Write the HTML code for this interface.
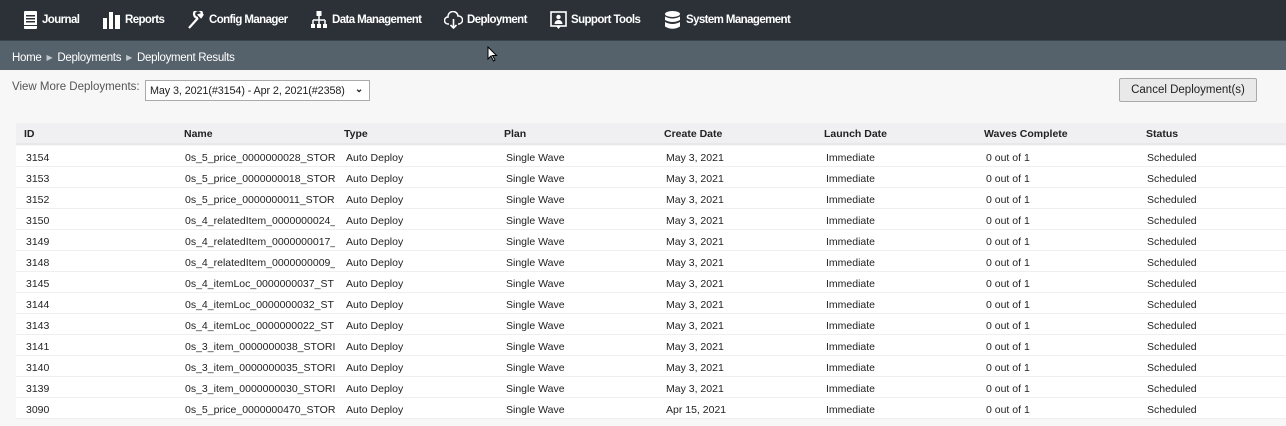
<!DOCTYPE html>
<html><head><meta charset="utf-8"><style>
*{margin:0;padding:0;box-sizing:border-box}
body{width:1286px;height:426px;overflow:hidden;background:#f7f7f8;font-family:"Liberation Sans",Arial,sans-serif;font-size:10.5px;color:#222}
.nav{height:40px;background:#2c3137;position:relative;color:#fff;font-weight:bold;font-size:11.5px;letter-spacing:-0.6px}
.nav span{position:absolute;top:14px}
.nav svg{position:absolute;top:11px}
.bc{height:30px;background:#56626b;color:#fff;font-size:11.5px;position:relative;border-top:1px solid #3c444b}
.bc div{position:absolute;left:12px;top:11px;letter-spacing:-0.3px}
.bc i{font-style:normal;color:#c0c6ca;font-size:8px;margin:0 5px;position:relative;top:-1px}
.vm{position:absolute;left:12px;top:81px;color:#555;font-size:11.5px}
.sel{position:absolute;left:145px;top:80px;width:225px;height:21px;border:1px solid #aaa;background:#fff;font-size:10.8px;padding:4px 0 0 4px;color:#222;overflow:hidden;white-space:nowrap;letter-spacing:-0.1px}
.sel b{position:absolute;right:0;top:0;width:20px;height:19px;background:#fff;font-size:10px;text-align:center;padding-top:3px}
.btn{position:absolute;left:1119px;top:78px;width:138px;height:24px;border:1px solid #aaa;background:#e9e9e9;font-size:11.5px;text-align:center;padding-top:5px;border-radius:2px}
.tbl{position:absolute;left:16px;top:123px;width:1270px}
.row{height:21px;position:relative;background:#fff;border-bottom:1px solid #efeff1}
.hd{background:#f0f0f3;font-weight:bold;height:22px;border-bottom:2px solid #e8e8ec}
.row span{position:absolute;top:6px;white-space:nowrap}
.row span.n{width:150px;overflow:hidden}
.hd span{top:5px}
</style></head><body>
<div class="nav">
<svg style="left:24px" width="13" height="18" viewBox="0 0 13 18"><rect x="0" y="0" width="13" height="18" rx="1" fill="#fff"/><rect x="2" y="4" width="9" height="1.5" fill="#2c3137"/><rect x="2" y="7" width="9" height="1.5" fill="#2c3137"/><rect x="2" y="10" width="9" height="1.5" fill="#2c3137"/><rect x="0" y="14" width="13" height="1" fill="#2c3137"/></svg><span style="left:42px">Journal</span>
<svg style="left:103px" width="17" height="18" viewBox="0 0 17 18"><rect x="0" y="7" width="4" height="11" fill="#fff"/><rect x="6" y="1" width="4" height="17" fill="#fff"/><rect x="12" y="4" width="5" height="14" fill="#fff"/></svg><span style="left:125px">Reports</span>
<svg style="left:187px" width="18" height="18" viewBox="0 0 18 18"><path d="M2 17 L11 7 M11 7 A4 4 0 1 1 15 3 L12 4 L14 6 L16 3" stroke="#fff" stroke-width="2.2" fill="none"/></svg><span style="left:209px">Config Manager</span>
<svg style="left:311px" width="16" height="18" viewBox="0 0 16 18"><rect x="5.5" y="0" width="5" height="5" fill="#fff"/><path d="M8 5V9M2 9H14M2 9V13M8 9V13M14 9V13" stroke="#fff" stroke-width="1.5" fill="none"/><rect x="0" y="13" width="4" height="4" fill="#fff"/><rect x="6" y="13" width="4" height="4" fill="#fff"/><rect x="12" y="13" width="4" height="4" fill="#fff"/></svg><span style="left:332px">Data Management</span>
<svg style="left:444px" width="19" height="18" viewBox="0 0 19 18"><path d="M5 13H4A3.5 3.5 0 0 1 4 6 A5 5 0 0 1 14 5 A4 4 0 0 1 15 13H14" stroke="#fff" stroke-width="1.5" fill="none"/><path d="M9.5 8V17M6.5 14L9.5 17L12.5 14" stroke="#fff" stroke-width="1.6" fill="none"/></svg><span style="left:467px">Deployment</span>
<svg style="left:550px" width="17" height="19" viewBox="0 0 17 19"><rect x="1" y="1" width="15" height="14" stroke="#fff" stroke-width="1.6" fill="none"/><circle cx="8.5" cy="6" r="2.2" fill="#fff"/><path d="M4.5 13a4 4 0 0 1 8 0z" fill="#fff"/><path d="M6 15L8.5 18L11 15" fill="#fff"/></svg><span style="left:571px">Support Tools</span>
<svg style="left:665px" width="15" height="19" viewBox="0 0 15 19"><ellipse cx="7.5" cy="3" rx="7.5" ry="3" fill="#fff"/><path d="M0 5.5Q7.5 9.5 15 5.5V9Q7.5 13 0 9Z" fill="#fff"/><path d="M0 11Q7.5 15 15 11V15.5Q7.5 20 0 15.5Z" fill="#fff"/></svg><span style="left:686px">System Management</span>
<svg style="left:487px;top:46px;position:absolute;z-index:5" width="11" height="16" viewBox="0 0 11 16"><path d="M1 1V13L4 10L6.5 15L8 14L5.5 9.5H9.5Z" fill="#fff" stroke="#000" stroke-width="1"/></svg>
</div>
<div class="bc"><div>Home<i>▶</i>Deployments<i>▶</i>Deployment Results</div></div>
<div class="vm">View More Deployments:</div>
<div class="sel">May 3, 2021(#3154) - Apr 2, 2021(#2358)<b>⌄</b></div>
<div class="btn">Cancel Deployment(s)</div>
<div class="tbl">
<div class="row hd"><span style="left:8px">ID</span><span style="left:168px">Name</span><span style="left:328px">Type</span><span style="left:488px">Plan</span><span style="left:648px">Create Date</span><span style="left:808px">Launch Date</span><span style="left:968px">Waves Complete</span><span style="left:1130px">Status</span></div>
</div>
<div style="position:absolute;left:16px;top:146px;width:1270px">
<div class="row"><span style="left:10px">3154</span><span class="n" style="left:169px">0s_5_price_0000000028_STOR</span><span style="left:330px">Auto Deploy</span><span style="left:490px">Single Wave</span><span style="left:650px">May 3, 2021</span><span style="left:810px">Immediate</span><span style="left:970px">0 out of 1</span><span style="left:1131px">Scheduled</span></div>
<div class="row"><span style="left:10px">3153</span><span class="n" style="left:169px">0s_5_price_0000000018_STOR</span><span style="left:330px">Auto Deploy</span><span style="left:490px">Single Wave</span><span style="left:650px">May 3, 2021</span><span style="left:810px">Immediate</span><span style="left:970px">0 out of 1</span><span style="left:1131px">Scheduled</span></div>
<div class="row"><span style="left:10px">3152</span><span class="n" style="left:169px">0s_5_price_0000000011_STOR</span><span style="left:330px">Auto Deploy</span><span style="left:490px">Single Wave</span><span style="left:650px">May 3, 2021</span><span style="left:810px">Immediate</span><span style="left:970px">0 out of 1</span><span style="left:1131px">Scheduled</span></div>
<div class="row"><span style="left:10px">3150</span><span class="n" style="left:169px">0s_4_relatedItem_0000000024_</span><span style="left:330px">Auto Deploy</span><span style="left:490px">Single Wave</span><span style="left:650px">May 3, 2021</span><span style="left:810px">Immediate</span><span style="left:970px">0 out of 1</span><span style="left:1131px">Scheduled</span></div>
<div class="row"><span style="left:10px">3149</span><span class="n" style="left:169px">0s_4_relatedItem_0000000017_</span><span style="left:330px">Auto Deploy</span><span style="left:490px">Single Wave</span><span style="left:650px">May 3, 2021</span><span style="left:810px">Immediate</span><span style="left:970px">0 out of 1</span><span style="left:1131px">Scheduled</span></div>
<div class="row"><span style="left:10px">3148</span><span class="n" style="left:169px">0s_4_relatedItem_0000000009_</span><span style="left:330px">Auto Deploy</span><span style="left:490px">Single Wave</span><span style="left:650px">May 3, 2021</span><span style="left:810px">Immediate</span><span style="left:970px">0 out of 1</span><span style="left:1131px">Scheduled</span></div>
<div class="row"><span style="left:10px">3145</span><span class="n" style="left:169px">0s_4_itemLoc_0000000037_ST</span><span style="left:330px">Auto Deploy</span><span style="left:490px">Single Wave</span><span style="left:650px">May 3, 2021</span><span style="left:810px">Immediate</span><span style="left:970px">0 out of 1</span><span style="left:1131px">Scheduled</span></div>
<div class="row"><span style="left:10px">3144</span><span class="n" style="left:169px">0s_4_itemLoc_0000000032_ST</span><span style="left:330px">Auto Deploy</span><span style="left:490px">Single Wave</span><span style="left:650px">May 3, 2021</span><span style="left:810px">Immediate</span><span style="left:970px">0 out of 1</span><span style="left:1131px">Scheduled</span></div>
<div class="row"><span style="left:10px">3143</span><span class="n" style="left:169px">0s_4_itemLoc_0000000022_ST</span><span style="left:330px">Auto Deploy</span><span style="left:490px">Single Wave</span><span style="left:650px">May 3, 2021</span><span style="left:810px">Immediate</span><span style="left:970px">0 out of 1</span><span style="left:1131px">Scheduled</span></div>
<div class="row"><span style="left:10px">3141</span><span class="n" style="left:169px">0s_3_item_0000000038_STORI</span><span style="left:330px">Auto Deploy</span><span style="left:490px">Single Wave</span><span style="left:650px">May 3, 2021</span><span style="left:810px">Immediate</span><span style="left:970px">0 out of 1</span><span style="left:1131px">Scheduled</span></div>
<div class="row"><span style="left:10px">3140</span><span class="n" style="left:169px">0s_3_item_0000000035_STORI</span><span style="left:330px">Auto Deploy</span><span style="left:490px">Single Wave</span><span style="left:650px">May 3, 2021</span><span style="left:810px">Immediate</span><span style="left:970px">0 out of 1</span><span style="left:1131px">Scheduled</span></div>
<div class="row"><span style="left:10px">3139</span><span class="n" style="left:169px">0s_3_item_0000000030_STORI</span><span style="left:330px">Auto Deploy</span><span style="left:490px">Single Wave</span><span style="left:650px">May 3, 2021</span><span style="left:810px">Immediate</span><span style="left:970px">0 out of 1</span><span style="left:1131px">Scheduled</span></div>
<div class="row"><span style="left:10px">3090</span><span class="n" style="left:169px">0s_5_price_0000000470_STOR</span><span style="left:330px">Auto Deploy</span><span style="left:490px">Single Wave</span><span style="left:650px">Apr 15, 2021</span><span style="left:810px">Immediate</span><span style="left:970px">0 out of 1</span><span style="left:1131px">Scheduled</span></div>
</div>
</body></html>
